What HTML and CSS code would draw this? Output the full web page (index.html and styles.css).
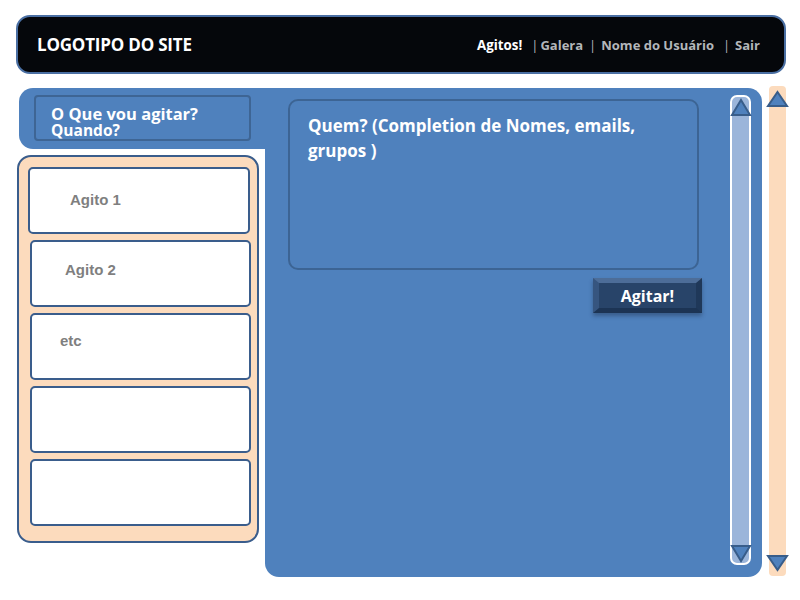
FILE: index.html
```html
<!DOCTYPE html>
<html lang="pt">
<head>
<meta charset="utf-8">
<title>Agitos</title>
<link rel="stylesheet" href="styles.css">
</head>
<body>
<div class="page">
  <header class="topbar">
    <div class="logo">LOGOTIPO DO SITE</div>
    <nav class="nav">
      <span class="nav-active">Agitos!</span>
      <span class="sep sep-a">|</span><span>Galera</span><span class="sep sep-b">|</span>
      <span>Nome do Usuário</span>
      <span class="sep sep-c">|</span><span>Sair</span>
    </nav>
  </header>

  <div class="content">
    <div class="left">
      <div class="tab">
        <div class="tab-box">
          <div class="tab-line1">O Que vou agitar?</div>
          <div class="tab-line2">Quando?</div>
        </div>
      </div>
      <div class="list">
        <div class="item item-1"><span class="item-text">Agito 1</span></div>
        <div class="item item-2"><span class="item-text">Agito 2</span></div>
        <div class="item item-3"><span class="item-text">etc</span></div>
        <div class="item"></div>
        <div class="item"></div>
      </div>
    </div>

    <div class="main">
      <div class="compose">
        <div class="who">Quem? (Completion de Nomes, emails, grupos )</div>
        <button class="btn">Agitar!</button>
      </div>
      <div class="track">
        <svg class="arrow" width="22" height="19" viewBox="0 0 22 19"><polygon points="11,2 20,17 2,17" fill="#4f81bd" stroke="#385d8a" stroke-width="2" stroke-linejoin="miter"/></svg>
        <svg class="arrow" width="22" height="19" viewBox="0 0 22 19"><polygon points="2,2 20,2 11,17" fill="#4f81bd" stroke="#385d8a" stroke-width="2" stroke-linejoin="miter"/></svg>
      </div>
    </div>

    <div class="outer-track">
      <svg class="arrow" width="23" height="18" viewBox="0 0 23 18"><polygon points="11.5,2 21,16 2,16" fill="#4f81bd" stroke="#385d8a" stroke-width="2"/></svg>
      <svg class="arrow" width="23" height="18" viewBox="0 0 23 18"><polygon points="2,2 21,2 11.5,16" fill="#4f81bd" stroke="#385d8a" stroke-width="2"/></svg>
    </div>
  </div>
</div>
</body>
</html>
```

FILE: styles.css
```css
* { box-sizing: border-box; }
html, body { margin: 0; padding: 0; background: #ffffff; }
body { font-family: "Open Sans", "Noto Sans", sans-serif; }

.page {
  width: 800px;
  height: 600px;
  padding-top: 15px;
  overflow: hidden;
}

.topbar {
  margin-left: 16px;
  width: 770px;
  height: 59px;
  background: #05070b;
  border: 2px solid #4a6fa3;
  border-radius: 14px;
  display: flex;
  align-items: center;
  justify-content: space-between;
  padding: 0 24px 0 19px;
  color: #ffffff;
}

.logo {
  font-weight: 700;
  font-size: 17px;
  letter-spacing: -0.2px;
}

.nav {
  display: flex;
  align-items: center;
  font-size: 13px;
  font-weight: 700;
  color: #b3b6ba;
}
.nav-active { color: #ffffff; font-size: 13.3px; }
.sep { font-weight: 400; }
.sep-a { margin: 0 2px 0 9px; }
.sep-b { margin: 0 5px 0 6px; }
.sep-c { margin: 0 5px 0 9px; }

.content {
  display: flex;
  align-items: flex-start;
  margin-top: 14px;
  padding-left: 17px;
}

.left {
  width: 248px;
  display: flex;
  flex-direction: column;
}

.tab {
  margin-left: 2px;
  height: 61px;
  background: #4f81bd;
  border-radius: 14px 0 0 14px;
  padding: 7px 14px 8px 15px;
}
.tab-box {
  height: 46px;
  border: 2px solid #3e6594;
  border-radius: 4px;
  padding: 8px 0 0 15px;
  color: #ffffff;
  font-weight: 700;
}
.tab-line1 { font-size: 16.5px; line-height: 18px; }
.tab-line2 { font-size: 15.5px; line-height: 15px; }

.list {
  margin-top: 6px;
  width: 242px;
  height: 388px;
  background: #fcdbbd;
  border: 2px solid #3a5d8c;
  border-radius: 14px;
  padding: 10px 6px 0 9px;
  display: flex;
  flex-direction: column;
  gap: 6px;
}

.item {
  height: 67px;
  background: #ffffff;
  border: 2px solid #3a5d8c;
  border-radius: 5px;
  margin-left: 2px;
}
.item-1 { margin-left: 0; margin-right: 1px; padding: 19px 0 0 40px; }
.item-2 { padding: 16px 0 0 33px; }
.item-3 { padding: 14px 0 0 28px; }
.item-text {
  font-family: "Liberation Sans", Arial, sans-serif;
  font-weight: 700;
  font-size: 15px;
  color: #7f7f7f;
}

.main {
  width: 497px;
  height: 489px;
  background: #4f81bd;
  border-radius: 0 14px 14px 14px;
  display: flex;
  align-items: flex-start;
  padding: 11px 0 0 23px;
}

.compose {
  width: 414px;
  display: flex;
  flex-direction: column;
}

.who {
  width: 411px;
  height: 171px;
  border: 2px solid #3c6494;
  border-radius: 10px;
  padding: 12px 20px 0 18px;
  color: #ffffff;
  font-weight: 700;
  font-size: 17px;
  line-height: 25px;
}

.btn {
  align-self: flex-end;
  margin-top: 8px;
  width: 109px;
  height: 35px;
  background: #284469;
  border-style: solid;
  border-width: 5px 6px 5px 6px;
  border-color: #4d6d98 #1f3859 #1c3454 #36557f;
  color: #ffffff;
  font-family: "Open Sans", "Noto Sans", sans-serif;
  font-weight: 700;
  font-size: 16px;
  line-height: 22px;
  padding: 0;
  box-shadow: 0 3px 4px rgba(30, 50, 80, 0.45);
}

.track {
  margin-left: 28px;
  margin-top: -4px;
  width: 21px;
  height: 470px;
  background: #9bb5da;
  border: 2px solid #ffffff;
  border-radius: 7px;
  display: flex;
  flex-direction: column;
  justify-content: space-between;
  align-items: center;
  padding: 1px 0 0 0;
}
.track .arrow { display: block; margin: 0 -2px; flex: none; }

.outer-track {
  margin-left: 7px;
  margin-top: -2px;
  width: 17px;
  height: 490px;
  background: #fcdbbd;
  border-radius: 4px;
  display: flex;
  flex-direction: column;
  justify-content: space-between;
  align-items: center;
  padding: 4px 0 4px 0;
}
.outer-track .arrow { display: block; margin: 0 -3px; flex: none; }
```
